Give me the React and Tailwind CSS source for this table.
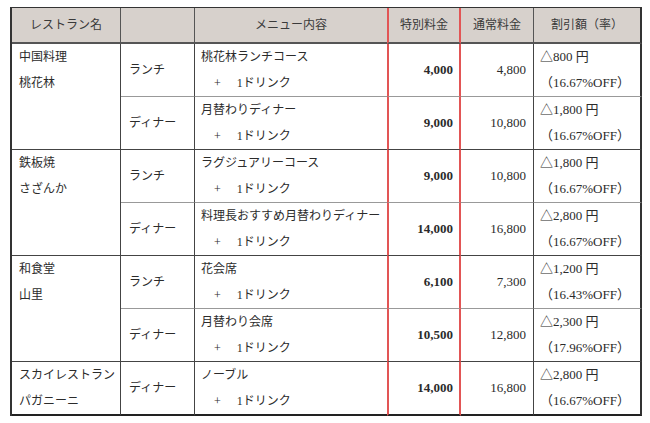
const data = [
  {
    name: ["中国料理", "桃花林"],
    rows: [
      { type: "ランチ", menu: "桃花林ランチコース", special: "4,000", regular: "4,800", off: "△800 円", rate: "（16.67%OFF）" },
      { type: "ディナー", menu: "月替わりディナー", special: "9,000", regular: "10,800", off: "△1,800 円", rate: "（16.67%OFF）" },
    ],
  },
  {
    name: ["鉄板焼", "さざんか"],
    rows: [
      { type: "ランチ", menu: "ラグジュアリーコース", special: "9,000", regular: "10,800", off: "△1,800 円", rate: "（16.67%OFF）" },
      { type: "ディナー", menu: "料理長おすすめ月替わりディナー", special: "14,000", regular: "16,800", off: "△2,800 円", rate: "（16.67%OFF）" },
    ],
  },
  {
    name: ["和食堂", "山里"],
    rows: [
      { type: "ランチ", menu: "花会席", special: "6,100", regular: "7,300", off: "△1,200 円", rate: "（16.43%OFF）" },
      { type: "ディナー", menu: "月替わり会席", special: "10,500", regular: "12,800", off: "△2,300 円", rate: "（17.96%OFF）" },
    ],
  },
  {
    name: ["スカイレストラン", "パガニーニ"],
    rows: [
      { type: "ディナー", menu: "ノーブル", special: "14,000", regular: "16,800", off: "△2,800 円", rate: "（16.67%OFF）" },
    ],
  },
];

// red frame around the special-price column
const red = "border-x-2 border-x-[#e25555]";

export default function App() {
  return (
    <div
      className="w-[650px] h-[423px] bg-white pt-[7px] pl-[10px] text-[#2b2b2b]"
      style={{ fontFamily: '"Liberation Serif", "Noto Sans CJK JP", serif' }}
    >
      <table className="table-fixed border-separate border-spacing-0 w-[630px] border-t border-l-2 border-[#333] text-[12px]">
        <colgroup>
          <col className="w-[109px]" />
          <col className="w-[74px]" />
          <col className="w-[192px]" />
          <col className="w-[74px]" />
          <col className="w-[73px]" />
          <col className="w-[108px]" />
        </colgroup>
        <thead>
          <tr className="bg-[#d7d1cc] h-[36px] text-[#3a3a3a]">
            <th className="font-normal border-r border-b-2 border-r-[#555] border-b-[#555] text-center">レストラン名</th>
            <th className="font-normal border-r border-b-2 border-r-[#555] border-b-[#555]"></th>
            <th className="font-normal border-b-2 border-b-[#555] text-center">メニュー内容</th>
            <th className={`font-normal border-b-2 border-b-[#555] text-center ${red}`}>特別料金</th>
            <th className="font-normal border-r border-b-2 border-r-[#555] border-b-[#555] text-center">通常料金</th>
            <th className="font-normal border-r-2 border-b-2 border-r-[#333] border-b-[#555] text-center">割引額（率）</th>
          </tr>
        </thead>
        <tbody>
          {data.map((r, ri) =>
            r.rows.map((row, i) => {
              const lastOfGroup = i === r.rows.length - 1;
              const lastRow = ri === data.length - 1;
              const bb = lastRow ? "border-b-2 border-b-[#222]" : lastOfGroup ? "border-b border-b-[#444]" : "border-b border-b-[#999]";
              return (
                <tr key={ri + "-" + i} className="h-[53px]">
                  {i === 0 && (
                    <td
                      rowSpan={r.rows.length}
                      className={`align-top pl-[7px] leading-[26px] border-r border-r-[#444] ${lastRow ? "border-b-2 border-b-[#222]" : "border-b border-b-[#444]"}`}
                    >
                      <div>{r.name[0]}</div>
                      <div>{r.name[1]}</div>
                    </td>
                  )}
                  <td className={`align-middle pl-[8px] border-r border-r-[#444] ${bb}`}>{row.type}</td>
                  <td className={`align-middle pl-[6px] leading-[26px] ${bb}`}>
                    <div>{row.menu}</div>
                    <div className="pl-[13px]">
                      +<span className="pl-[16px]">1ドリンク</span>
                    </div>
                  </td>
                  <td className={`align-middle text-right pr-[6px] font-bold text-[13px] ${red} ${bb}`}>{row.special}</td>
                  <td className={`align-middle text-right pr-[7px] text-[13px] border-r border-r-[#444] ${bb}`}>{row.regular}</td>
                  <td className={`align-middle pl-[6px] leading-[26px] text-[13px] border-r-2 border-r-[#333] ${bb}`}>
                    <div>{row.off}</div>
                    <div>{row.rate}</div>
                  </td>
                </tr>
              );
            })
          )}
        </tbody>
      </table>
    </div>
  );
}
